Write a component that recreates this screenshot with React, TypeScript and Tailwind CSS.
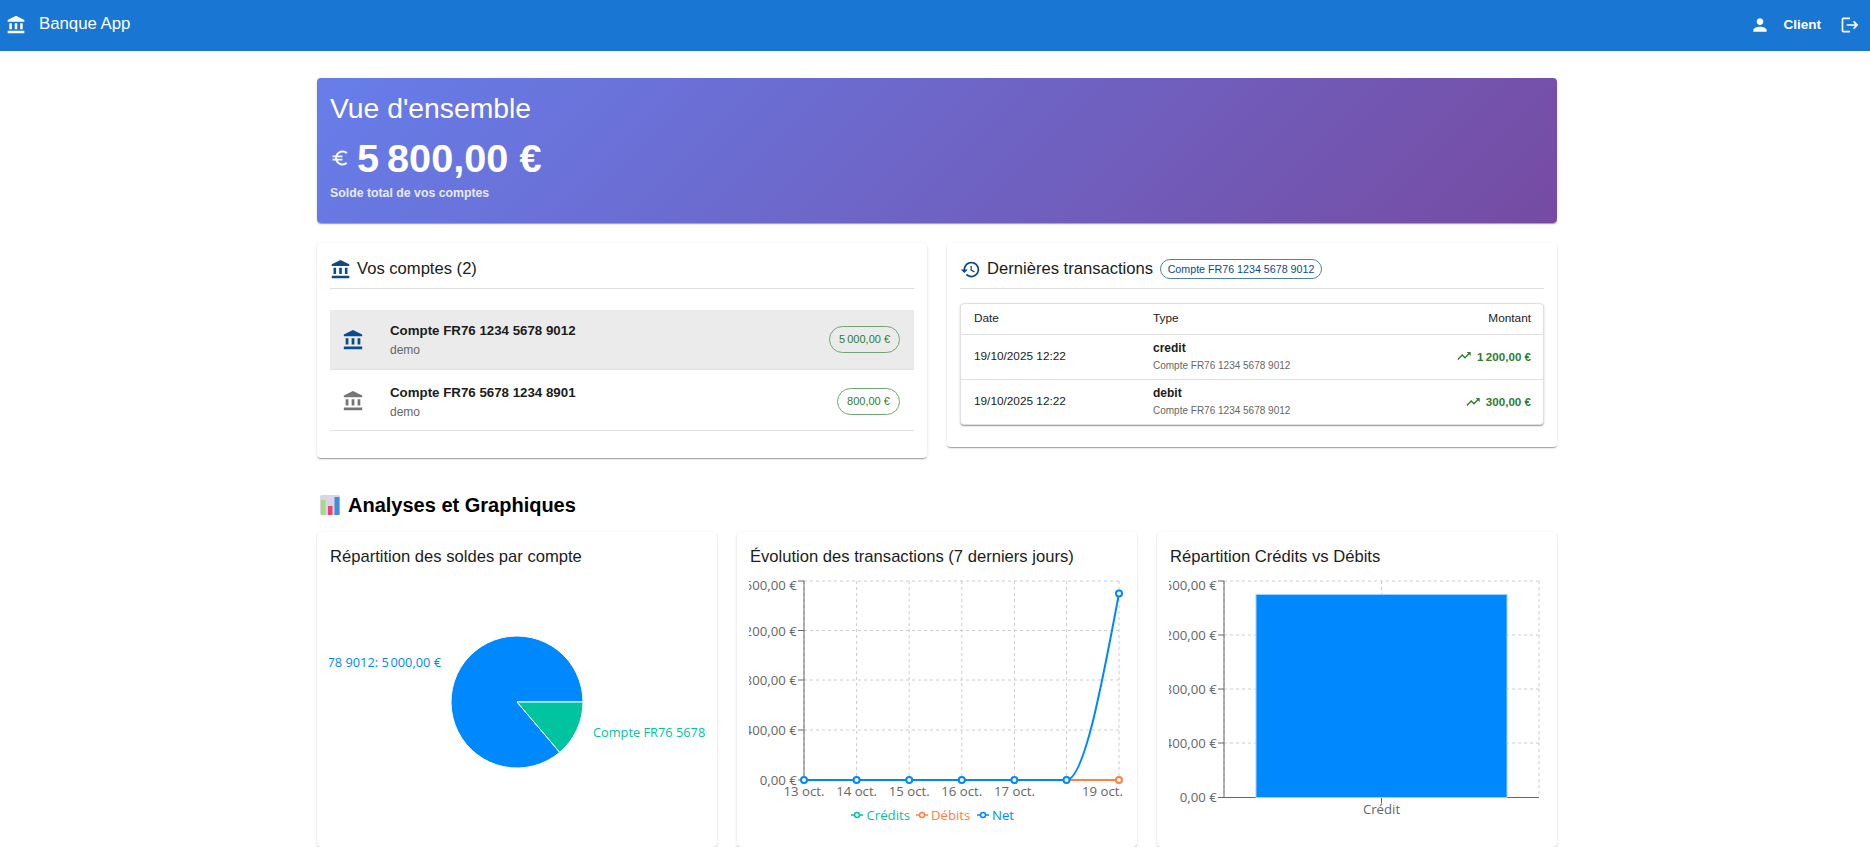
import React from "react";

const P = {
  bank: "M4 10h3v7H4zM10.5 10h3v7h-3zM2 19h20v3H2zM17 10h3v7h-3zM12 1 2 6v2h20V6z",
  person: "M12 12c2.21 0 4-1.79 4-4s-1.79-4-4-4-4 1.79-4 4 1.79 4 4 4m0 2c-2.67 0-8 1.34-8 4v2h16v-2c0-2.66-5.33-4-8-4",
  logout: "m17 7-1.41 1.41L18.17 11H8v2h10.17l-2.58 2.58L17 17l5-5zM4 5h8V3H4c-1.1 0-2 .9-2 2v14c0 1.1.9 2 2 2h8v-2H4z",
  history: "M13 3c-4.97 0-9 4.03-9 9H1l3.89 3.89.07.14L9 12H6c0-3.87 3.13-7 7-7s7 3.13 7 7-3.13 7-7 7c-1.93 0-3.68-.79-4.94-2.06l-1.42 1.42C8.27 19.99 10.51 21 13 21c4.97 0 9-4.03 9-9s-4.03-9-9-9zm-1 5v5l4.28 2.54.72-1.21-3.5-2.08V8H12z",
  trend: "m16 6 2.29 2.29-4.88 4.88-4-4L2 16.59 3.41 18l6-6 4 4 6.3-6.29L22 12V6z",
  euro: "M15 18.5c-2.51 0-4.68-1.42-5.76-3.5H15v-2H8.58c-.05-.33-.08-.66-.08-1s.03-.67.08-1H15V9H9.24C10.32 6.92 12.5 5.5 15 5.5c1.61 0 3.09.59 4.23 1.57L21 5.3C19.41 3.87 17.3 3 15 3c-3.92 0-7.24 2.51-8.48 6H3v2h3.06c-.04.33-.06.66-.06 1s.02.67.06 1H3v2h3.52c1.24 3.49 4.56 6 8.48 6 2.31 0 4.41-.87 6-2.3l-1.78-1.77c-1.13.98-2.6 1.57-4.2 1.57z",
};

function Icon({ d, size, className }: { d: string; size: number; className?: string }) {
  return (
    <svg viewBox="0 0 24 24" width={size} height={size} fill="currentColor" className={"shrink-0 " + (className ?? "")}>
      <path d={d} />
    </svg>
  );
}

const paper =
  "bg-white rounded-[4px] shadow-[0_2px_1px_-1px_rgba(0,0,0,0.2),0_1px_1px_0_rgba(0,0,0,0.14),0_1px_3px_0_rgba(0,0,0,0.12)]";

function AccountRow({ name, amount, selected, chip, row }: { name: string; amount: string; selected?: boolean; chip: string; row: string }) {
  return (
    <div className={"flex items-center border-b border-[#e0e0e0] pl-[12px] pr-[14px] " + row + " " + (selected ? "bg-[#ebebeb]" : "")}>
      <Icon d={P.bank} size={22} className={selected ? "text-[#0d4a8a]" : "text-[#757575]"} />
      <div className="ml-[26px] flex-1">
        <div className="text-[13.3px] font-bold leading-[20px] mt-[1px] text-[#1c1c1c]">{name}</div>
        <div className="text-[12px] leading-[18px] text-[#666]">demo</div>
      </div>
      <span className={"flex items-center justify-center h-[27px] rounded-full border border-[#6fa872] text-[11px] text-[#2e7d32] " + chip}>
        {amount}
      </span>
    </div>
  );
}

function TxRow({ kind, amount }: { kind: string; amount: string }) {
  return (
    <tr className="h-[45px] border-t border-[#e0e0e0]">
      <td className="pl-[13px] text-[11.8px] text-[#1c1c1c]">19/10/2025 12:22</td>
      <td>
        <div className="text-[12px] font-bold leading-[16px] text-[#1c1c1c]">{kind}</div>
        <div className="text-[10px] leading-[14px] mt-[3px] text-[#666]">Compte FR76 1234 5678 9012</div>
      </td>
      <td className="pr-[12px]">
        <div className="flex items-center justify-end gap-[5px] text-[11.6px] font-bold text-[#2e7d32]">
          <Icon d={P.trend} size={16} />
          {amount}
        </div>
      </td>
    </tr>
  );
}

const tickClass = "font-['Open_Sans',sans-serif] text-[13.2px] fill-[#666]";

function YLabels({ items }: { items: [string, number][] }) {
  return (
    <>
      {items.map(([t, y]) => (
        <text key={t} x={47.7} y={y} textAnchor="end" dominantBaseline="central" className={tickClass}>
          {t}
        </text>
      ))}
    </>
  );
}

function PieSvg() {
  const cx = 188, cy = 126, r = 66;
  const a = (49.66 * Math.PI) / 180;
  const ex = cx + r * Math.cos(a), ey = cy + r * Math.sin(a);
  return (
    <svg width={376} height={250} className="block">
      <path d={`M${cx} ${cy}L${cx + r} ${cy}A${r} ${r} 0 1 0 ${ex} ${ey}Z`} fill="#0088FE" stroke="#fff" />
      <path d={`M${cx} ${cy}L${cx + r} ${cy}A${r} ${r} 0 0 1 ${ex} ${ey}Z`} fill="#00C49F" stroke="#fff" />
      <text x={112} y={86} textAnchor="end" dominantBaseline="central" className="font-['Open_Sans',sans-serif] text-[12.8px] fill-[#0088FE]">
        Compte FR76 1234 5678 9012: 5{"\u202f"}000,00{"\u00a0"}€
      </text>
      <text x={264} y={156} dominantBaseline="central" className="font-['Open_Sans',sans-serif] text-[12.8px] fill-[#00C49F]">
        Compte FR76 5678 1234 8901: 800,00{"\u00a0"}€
      </text>
    </svg>
  );
}

function LineSvg() {
  const xs = [55, 107.6, 160.2, 212.8, 265.4, 317.5, 370];
  const top = 5, bot = 204;
  const ys = [5, 54.5, 104, 154, 204];
  const labels = ["13 oct.", "14 oct.", "15 oct.", "16 oct.", "17 oct."];
  const dot = (x: number, y: number, c: string) => <circle key={x + c} cx={x} cy={y} r={3} fill="#fff" stroke={c} strokeWidth={2} />;
  return (
    <svg width={376} height={250} className="block">
      <g stroke="#ccc" strokeDasharray="3 3" fill="none">
        {ys.map((y) => <line key={y} x1={55} x2={370} y1={y} y2={y} />)}
        {xs.map((x) => <line key={x} x1={x} x2={x} y1={top} y2={bot} />)}
      </g>
      <g stroke="#666">
        <line x1={55} x2={55} y1={top} y2={bot} />
        {ys.map((y) => <line key={y} x1={49} x2={55} y1={y} y2={y} />)}
      </g>
      <YLabels items={[["1\u202f600,00\u00a0€", 9], ["1\u202f200,00\u00a0€", 55], ["800,00\u00a0€", 104], ["400,00\u00a0€", 154], ["0,00\u00a0€", 204]]} />
      {labels.map((t, i) => (
        <text key={t} x={xs[i]} y={215} textAnchor="middle" dominantBaseline="central" className={tickClass}>{t}</text>
      ))}
      <text x={374} y={215} textAnchor="end" dominantBaseline="central" className={tickClass}>19 oct.</text>
      <line x1={55} x2={370} y1={bot} y2={bot} stroke="#00C49F" strokeWidth={2} />
      <line x1={55} x2={370} y1={bot} y2={bot} stroke="#FF8042" strokeWidth={2} />
      {dot(370, bot, "#FF8042")}
      <path d={`M55 ${bot}L317.5 ${bot}C335 ${bot} 352.7 110 370 17.5`} fill="none" stroke="#0088FE" strokeWidth={2} />
      {xs.slice(0, 6).map((x) => dot(x, bot, "#0088FE"))}
      {dot(370, 17.5, "#0088FE")}
      <g className="font-['Open_Sans',sans-serif] text-[13.2px]">
        <line x1={102} x2={114} y1={239} y2={239} stroke="#00C49F" strokeWidth={1.5} />
        <circle cx={108} cy={239} r={2.5} fill="#fff" stroke="#00C49F" strokeWidth={1.5} />
        <text x={117.5} y={239} dominantBaseline="central" className="fill-[#00C49F]">Crédits</text>
        <line x1={167} x2={179} y1={239} y2={239} stroke="#FF8042" strokeWidth={1.5} />
        <circle cx={173} cy={239} r={2.5} fill="#fff" stroke="#FF8042" strokeWidth={1.5} />
        <text x={182} y={239} dominantBaseline="central" className="fill-[#FF8042]">Débits</text>
        <line x1={228} x2={240} y1={239} y2={239} stroke="#0088FE" strokeWidth={1.5} />
        <circle cx={234} cy={239} r={2.5} fill="#fff" stroke="#0088FE" strokeWidth={1.5} />
        <text x={243} y={239} dominantBaseline="central" className="fill-[#0088FE]">Net</text>
      </g>
    </svg>
  );
}

function BarSvg() {
  const ys = [5, 59, 113, 167, 221.5];
  return (
    <svg width={376} height={250} className="block">
      <g stroke="#ccc" strokeDasharray="3 3" fill="none">
        {ys.map((y) => <line key={y} x1={55} x2={370} y1={y} y2={y} />)}
        {[55, 212.5, 370].map((x) => <line key={x} x1={x} x2={x} y1={5} y2={221.5} />)}
      </g>
      <g stroke="#666">
        <line x1={55} x2={55} y1={5} y2={221.5} />
        <line x1={55} x2={370} y1={221.5} y2={221.5} />
        {ys.map((y) => <line key={y} x1={49} x2={55} y1={y} y2={y} />)}
        <line x1={212.5} x2={212.5} y1={221.5} y2={227.5} />
      </g>
      <YLabels items={[["1\u202f600,00\u00a0€", 9], ["1\u202f200,00\u00a0€", 59], ["800,00\u00a0€", 113], ["400,00\u00a0€", 167], ["0,00\u00a0€", 221]]} />
      <rect x={87} y={18.5} width={251} height={203} fill="#0088FE" stroke="#9fd0ff" strokeWidth={1} />
      <text x={212.5} y={232.5} textAnchor="middle" dominantBaseline="central" className={tickClass}>Crédit</text>
    </svg>
  );
}

function ChartCard({ title, children }: { title: string; children: React.ReactNode }) {
  return (
    <div className={paper + " h-[315px] px-3"}>
      <h3 className="pt-[14px] pl-[1px] h-[44px] text-[16.6px] leading-[22px] text-[#1c1c1c]">{title}</h3>
      {children}
    </div>
  );
}

export default function App() {
  return (
    <div className="h-[847px] overflow-hidden bg-white font-['Liberation_Sans',Arial,sans-serif]">
      <header className="h-[51px] bg-[#1976d2] flex items-center text-white pl-[6px] pr-[10px] pb-[1px]">
        <Icon d={P.bank} size={20} />
        <span className="ml-[13px] text-[16.8px] -mt-[2px]">Banque App</span>
        <div className="ml-auto flex items-center">
          <Icon d={P.person} size={20} />
          <span className="ml-[13px] text-[13.5px] font-bold">Client</span>
          <Icon d={P.logout} size={20} className="ml-[19px]" />
        </div>
      </header>

      <main className="w-[1240px] ml-[317px] pt-[27px]">
        <section className={"h-[145px] rounded-[4px] px-[13px] pt-[12px] text-white bg-[linear-gradient(135deg,#667eea_0%,#764ba2_100%)] shadow-[0_2px_1px_-1px_rgba(0,0,0,0.2),0_1px_1px_0_rgba(0,0,0,0.14),0_1px_3px_0_rgba(0,0,0,0.12)]"}>
          <h1 className="text-[28.3px] leading-[36px]">Vue d'ensemble</h1>
          <div className="mt-2 flex items-center h-[48px]">
            <Icon d={P.euro} size={20} className="opacity-95" />
            <span className="ml-[7px] text-[39.7px] font-bold leading-[48px]">5{"\u202f"}800,00{"\u00a0"}€</span>
          </div>
          <p className="mt-[2px] text-[12.3px] font-bold leading-[18px] opacity-85">Solde total de vos comptes</p>
        </section>

        <div className="mt-[20px] grid grid-cols-2 gap-5 items-start">
          <div className={paper + " px-[13px] h-[215px]"}>
            <div className="h-[46px] pt-[7px] flex items-center border-b border-[#e0e0e0]">
              <Icon d={P.bank} size={21} className="text-[#0d4a8a] mt-[1px]" />
              <h2 className="ml-[6px] text-[16.6px] text-[#1c1c1c]">Vos comptes (2)</h2>
            </div>
            <div className="mt-[21px]">
              <AccountRow row="h-[60px]" name="Compte FR76 1234 5678 9012" amount={"5\u202f000,00\u00a0€"} selected chip="w-[71px]" />
              <AccountRow row="h-[61px] pt-[2px]" name="Compte FR76 5678 1234 8901" amount={"800,00\u00a0€"} chip="w-[63px]" />
            </div>
          </div>

          <div className={paper + " px-[13px] h-[204px]"}>
            <div className="h-[46px] pt-[7px] flex items-center border-b border-[#e0e0e0]">
              <Icon d={P.history} size={21} className="text-[#0d4a8a] mt-[1px]" />
              <h2 className="ml-[6px] text-[16.6px] text-[#1c1c1c]">Dernières transactions</h2>
              <span className="ml-[7px] h-[20px] w-[162px] flex items-center justify-center rounded-full border border-[#4f7fb0] text-[10.7px] text-[#0d4a8a]">
                Compte FR76 1234 5678 9012
              </span>
            </div>
            <div className={paper + " mt-[14px] border border-[#e0e0e0] overflow-hidden"}>
              <table className="w-full table-fixed border-collapse">
                <colgroup>
                  <col className="w-[192px]" />
                  <col className="w-[210px]" />
                  <col />
                </colgroup>
                <thead>
                  <tr className="h-[30px] text-[11.8px] text-[#1c1c1c]">
                    <th className="pl-[13px] text-left font-normal">Date</th>
                    <th className="text-left font-normal">Type</th>
                    <th className="pr-[12px] text-right font-normal">Montant</th>
                  </tr>
                </thead>
                <tbody>
                  <TxRow kind="credit" amount={"1\u202f200,00\u00a0€"} />
                  <TxRow kind="debit" amount={"300,00\u00a0€"} />
                </tbody>
              </table>
            </div>
          </div>
        </div>

        <h2 className="mt-[35px] h-[39px] flex items-start text-[20px] font-bold leading-[24px] text-black">
          <svg width="20" height="20" viewBox="0 0 20 20" className="ml-[3px] mt-[2px] shrink-0">
            <rect width="20" height="20" rx="1.5" fill="#d9d5e4" />
            <rect x="1" y="5" width="4.5" height="15" fill="#a3dc7a" />
            <rect x="8" y="11" width="4.5" height="9" fill="#ec407a" />
            <rect x="14.5" y="2" width="5" height="18" fill="#3f8fd6" />
          </svg>
          <span className="ml-[8px]">Analyses et Graphiques</span>
        </h2>

        <div className="grid grid-cols-3 gap-5">
          <ChartCard title="Répartition des soldes par compte"><PieSvg /></ChartCard>
          <ChartCard title="Évolution des transactions (7 derniers jours)"><LineSvg /></ChartCard>
          <ChartCard title="Répartition Crédits vs Débits"><BarSvg /></ChartCard>
        </div>
      </main>
    </div>
  );
}
